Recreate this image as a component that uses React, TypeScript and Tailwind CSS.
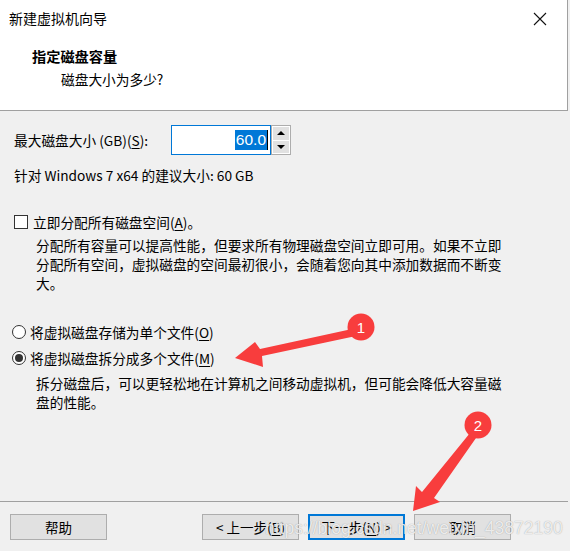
import React from "react";

const cjk = { fontFamily: '"Noto Sans CJK SC", "Noto Sans", sans-serif' };

function Key({ k }: { k: string }) {
	return (
		<>
			(<span className="underline underline-offset-2">{k}</span>)
		</>
	);
}

function Radio({ checked }: { checked?: boolean }) {
	return (
		<span className="flex h-[14px] w-[14px] shrink-0 items-center justify-center rounded-full border border-[#333] bg-white">
			{checked && <span className="h-[8px] w-[8px] rounded-full bg-[#333]" />}
		</span>
	);
}

function Btn({ children, primary }: { children: React.ReactNode; primary?: boolean }) {
	return (
		<div
			className={`flex h-[26px] w-[97px] items-center justify-center bg-[#e1e1e1] text-[13.5px] ${
				primary ? "border-2 border-[#0078d7]" : "border border-[#adadad]"
			}`}
		>
			{children}
		</div>
	);
}

function Annotations() {
	return (
		<svg className="pointer-events-none absolute inset-0" width={570} height={551}>
			<g fill="#f83d3d">
				<polygon points="352,329 356,336 262,356 263,367 235,358 255,342 260,349" />
				<circle cx={361} cy={327} r={13.5} />
				<polygon points="470,433 476,438 434,498 440,502 413,511 416,486 422,492" />
				<circle cx={478} cy={425} r={13.5} />
			</g>
			<g fill="#fff" fontSize="15" fontFamily="Liberation Sans, sans-serif" textAnchor="middle">
				<text x={361} y={332.5}>1</text>
				<text x={478} y={430.5}>2</text>
			</g>
		</svg>
	);
}

export default function App() {
	return (
		<div className="relative h-[551px] w-[570px] overflow-hidden bg-[#f0f0f0] text-black" style={cjk}>
			<div className="mr-[2px] flex h-[111px] flex-col border-r border-b border-[#a0a0a0] bg-white">
				<div className="flex h-[37px] items-center justify-between pr-[20px] pl-[9px]">
					<span className="text-[14px]">新建虚拟机向导</span>
					<svg width="14" height="14" viewBox="0 0 14 14">
						<path d="M1 1 L13 13 M13 1 L1 13" stroke="#111" strokeWidth="1.1" />
					</svg>
				</div>
				<div className="pt-[9px] pl-[32px] text-[14.2px] leading-[20px] font-bold">指定磁盘容量</div>
				<div className="pt-[3px] pl-[61px] text-[13.7px] leading-[20px]">磁盘大小为多少?</div>
			</div>

			<div className="flex flex-col px-[14px] text-[13.7px]">
				<div className="mt-[14px] flex items-center">
					<span className="w-[157px]">
						最大磁盘大小 (GB)
						<Key k="S" />:
					</span>
					<div className="flex h-[30px] w-[100px] items-center justify-end border border-[#0078d7] bg-white pr-[2px]">
						<span
							className="bg-[#0078d7] px-[1px] text-[15.5px] leading-[20px] text-white"
							style={{ fontFamily: '"Liberation Sans", sans-serif' }}
						>
							60.0
						</span>
						<span className="h-[20px] w-px bg-black" />
					</div>
					<div className="flex h-[30px] w-[20px] flex-col border border-[#adadad] bg-white p-px">
						<div className="flex flex-1 items-center justify-center bg-[#e1e1e1]">
							<span className="h-0 w-0 border-x-[4px] border-b-[4px] border-x-transparent border-b-black" />
						</div>
						<div className="mt-px flex flex-1 items-center justify-center bg-[#e1e1e1]">
							<span className="h-0 w-0 border-x-[4px] border-t-[4px] border-x-transparent border-t-black" />
						</div>
					</div>
				</div>
				<div className="mt-[10px] leading-[20px]">针对 Windows 7 x64 的建议大小: 60 GB</div>

				<div className="mt-[27px] flex items-center gap-[5px] leading-[20px]">
					<span className="h-[14px] w-[14px] border border-[#333] bg-white" />
					<span>
						立即分配所有磁盘空间
						<Key k="A" />。
					</span>
				</div>
				<div className="mt-[4px] w-[500px] pl-[22px] leading-[19px]">
					分配所有容量可以提高性能，但要求所有物理磁盘空间立即可用。如果不立即分配所有空间，虚拟磁盘的空间最初很小，会随着您向其中添加数据而不断变大。
				</div>

				<div className="mt-[29px] -ml-[2px] flex items-center gap-[4px] leading-[20px]">
					<Radio />
					<span>
						将虚拟磁盘存储为单个文件
						<Key k="O" />
					</span>
				</div>
				<div className="mt-[6px] -ml-[2px] flex items-center gap-[4px] leading-[20px]">
					<Radio checked />
					<span>
						将虚拟磁盘拆分成多个文件
						<Key k="M" />
					</span>
				</div>
				<div className="mt-[6px] w-[500px] pl-[22px] leading-[19px]">
					拆分磁盘后，可以更轻松地在计算机之间移动虚拟机，但可能会降低大容量磁盘的性能。
				</div>
			</div>

			<div className="absolute top-[501px] right-[2px] left-0 border-t border-[#a0a0a0]" />
			<div className="absolute top-[514px] right-0 left-0 flex px-[10px]">
				<Btn>帮助</Btn>
				<div className="mr-[49px] ml-auto flex gap-[9px]">
					<Btn>
						&lt; 上一步
						<Key k="B" />
					</Btn>
					<Btn primary>
						下一步
						<Key k="N" /> &gt;
					</Btn>
					<Btn>取消</Btn>
				</div>
			</div>

			<div
				className="pointer-events-none absolute top-[515px] left-[265px] text-[17.5px] whitespace-nowrap text-white/80"
				style={{ fontFamily: '"Liberation Sans", sans-serif', textShadow: "0 0 1px rgba(90,90,90,0.6)" }}
			>
				https://blog.csdn.net/weixin_43872190
			</div>

			<Annotations />
		</div>
	);
}
